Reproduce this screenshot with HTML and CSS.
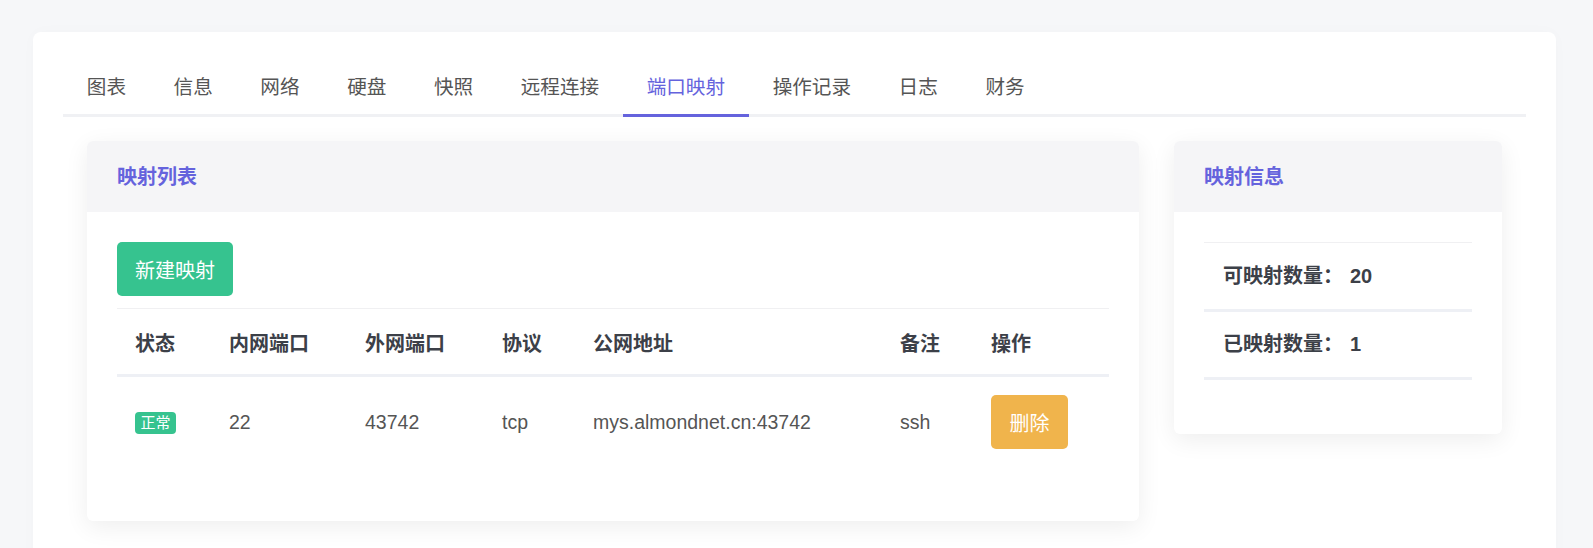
FILE: index.html
```html
<!DOCTYPE html>
<html lang="zh-CN">
<head>
<meta charset="utf-8">
<title>端口映射</title>
<link rel="stylesheet" href="styles.css">
</head>
<body>
<div class="page">
  <div class="panel">
    <div class="tabs">
      <div class="tab">图表</div>
      <div class="tab">信息</div>
      <div class="tab">网络</div>
      <div class="tab">硬盘</div>
      <div class="tab">快照</div>
      <div class="tab">远程连接</div>
      <div class="tab active">端口映射</div>
      <div class="tab">操作记录</div>
      <div class="tab">日志</div>
      <div class="tab">财务</div>
    </div>
    <div class="content">
      <div class="card card-list">
        <div class="card-head">映射列表</div>
        <div class="card-body list-body">
          <div class="toolbar"><button class="btn btn-green">新建映射</button></div>
          <div class="map-table">
            <div class="row head-row">
              <div class="cell">状态</div>
              <div class="cell">内网端口</div>
              <div class="cell">外网端口</div>
              <div class="cell">协议</div>
              <div class="cell">公网地址</div>
              <div class="cell">备注</div>
              <div class="cell">操作</div>
            </div>
            <div class="row data-row">
              <div class="cell"><span class="tag">正常</span></div>
              <div class="cell">22</div>
              <div class="cell">43742</div>
              <div class="cell">tcp</div>
              <div class="cell">mys.almondnet.cn:43742</div>
              <div class="cell">ssh</div>
              <div class="cell"><button class="btn btn-orange">删除</button></div>
            </div>
          </div>
        </div>
      </div>
      <div class="card card-info">
        <div class="card-head">映射信息</div>
        <div class="card-body info-body">
          <div class="info-row">可映射数量：<span class="num">20</span></div>
          <div class="info-row">已映射数量：<span class="num">1</span></div>
        </div>
      </div>
    </div>
  </div>
</div>
</body>
</html>
```
FILE: styles.css
```css
* { box-sizing: border-box; }
html, body { margin: 0; padding: 0; }
body {
  background: #f6f7f9;
  font-family: "Liberation Sans", "Noto Sans CJK SC", sans-serif;
  color: #555;
  height: 548px;
  overflow: hidden;
}
.page {
  padding: 32px 37px 0 33px;
}
.panel {
  background: #fff;
  border-radius: 8px;
  padding: 29px 30px 0 30px;
  min-height: 560px;
  box-shadow: 0 0 16px rgba(0, 0, 0, 0.02);
}
.tabs {
  display: flex;
  border-bottom: 3px solid #f0f1f4;
}
.tab {
  padding: 0 23.8px;
  line-height: 53px;
  font-size: 19.6px;
  color: #555;
  margin-bottom: -3px;
  border-bottom: 3px solid transparent;
}
.tab.active {
  color: #6563dd;
  border-bottom-color: #6563dd;
}
.content {
  display: flex;
  align-items: flex-start;
  gap: 35px;
  padding: 24px 24px;
}
.card {
  background: #fff;
  border-radius: 6px;
  box-shadow: 0 6px 24px rgba(0, 0, 0, 0.07);
  overflow: hidden;
}
.card-list { width: 1052px; }
.card-info { width: 328px; }
.card-head {
  background: #f5f5f7;
  height: 71px;
  line-height: 72px;
  padding: 0 30px;
  font-size: 20px;
  font-weight: bold;
  color: #6563dd;
}
.card-body { padding: 30px 30px 54px 30px; }
.toolbar { padding-bottom: 12px; }
.btn {
  display: block;
  border: none;
  font-family: inherit;
  font-size: 20px;
  color: #fff;
  height: 54px;
  border-radius: 5px;
  padding: 0 18px;
  cursor: pointer;
}
.btn-green { background: #36c38f; }
.btn-orange { background: #f0b44c; padding: 0 18.5px; }
.map-table {
  border-top: 1px solid #f0f0f2;
}
.row {
  display: grid;
  grid-template-columns: 94px 136px 137px 91px 307px 91px 136px;
  align-items: center;
}
.cell {
  padding-left: 18px;
  white-space: nowrap;
}
.head-row {
  height: 68px;
  padding-top: 1px;
  border-bottom: 3px solid #eef0f5;
  font-weight: bold;
  font-size: 20px;
  color: #3c4048;
}
.data-row {
  height: 90px;
  font-size: 19.5px;
  color: #555;
}
.tag {
  display: inline-block;
  background: #36c38f;
  color: #fff;
  font-size: 15px;
  line-height: 22px;
  padding: 0 5.5px;
  border-radius: 4px;
  vertical-align: middle;
}
.info-body { padding-bottom: 54px; }
.info-body::before {
  content: "";
  display: block;
  border-top: 1px solid #f0f0f2;
}
.info-row {
  height: 69px;
  line-height: 66px;
  padding-left: 19px;
  font-size: 20px;
  font-weight: bold;
  color: #3c4048;
  border-bottom: 3px solid #eef0f5;
}
.info-row + .info-row { height: 68px; line-height: 65px; }
.num { margin-left: 7px; }
```
